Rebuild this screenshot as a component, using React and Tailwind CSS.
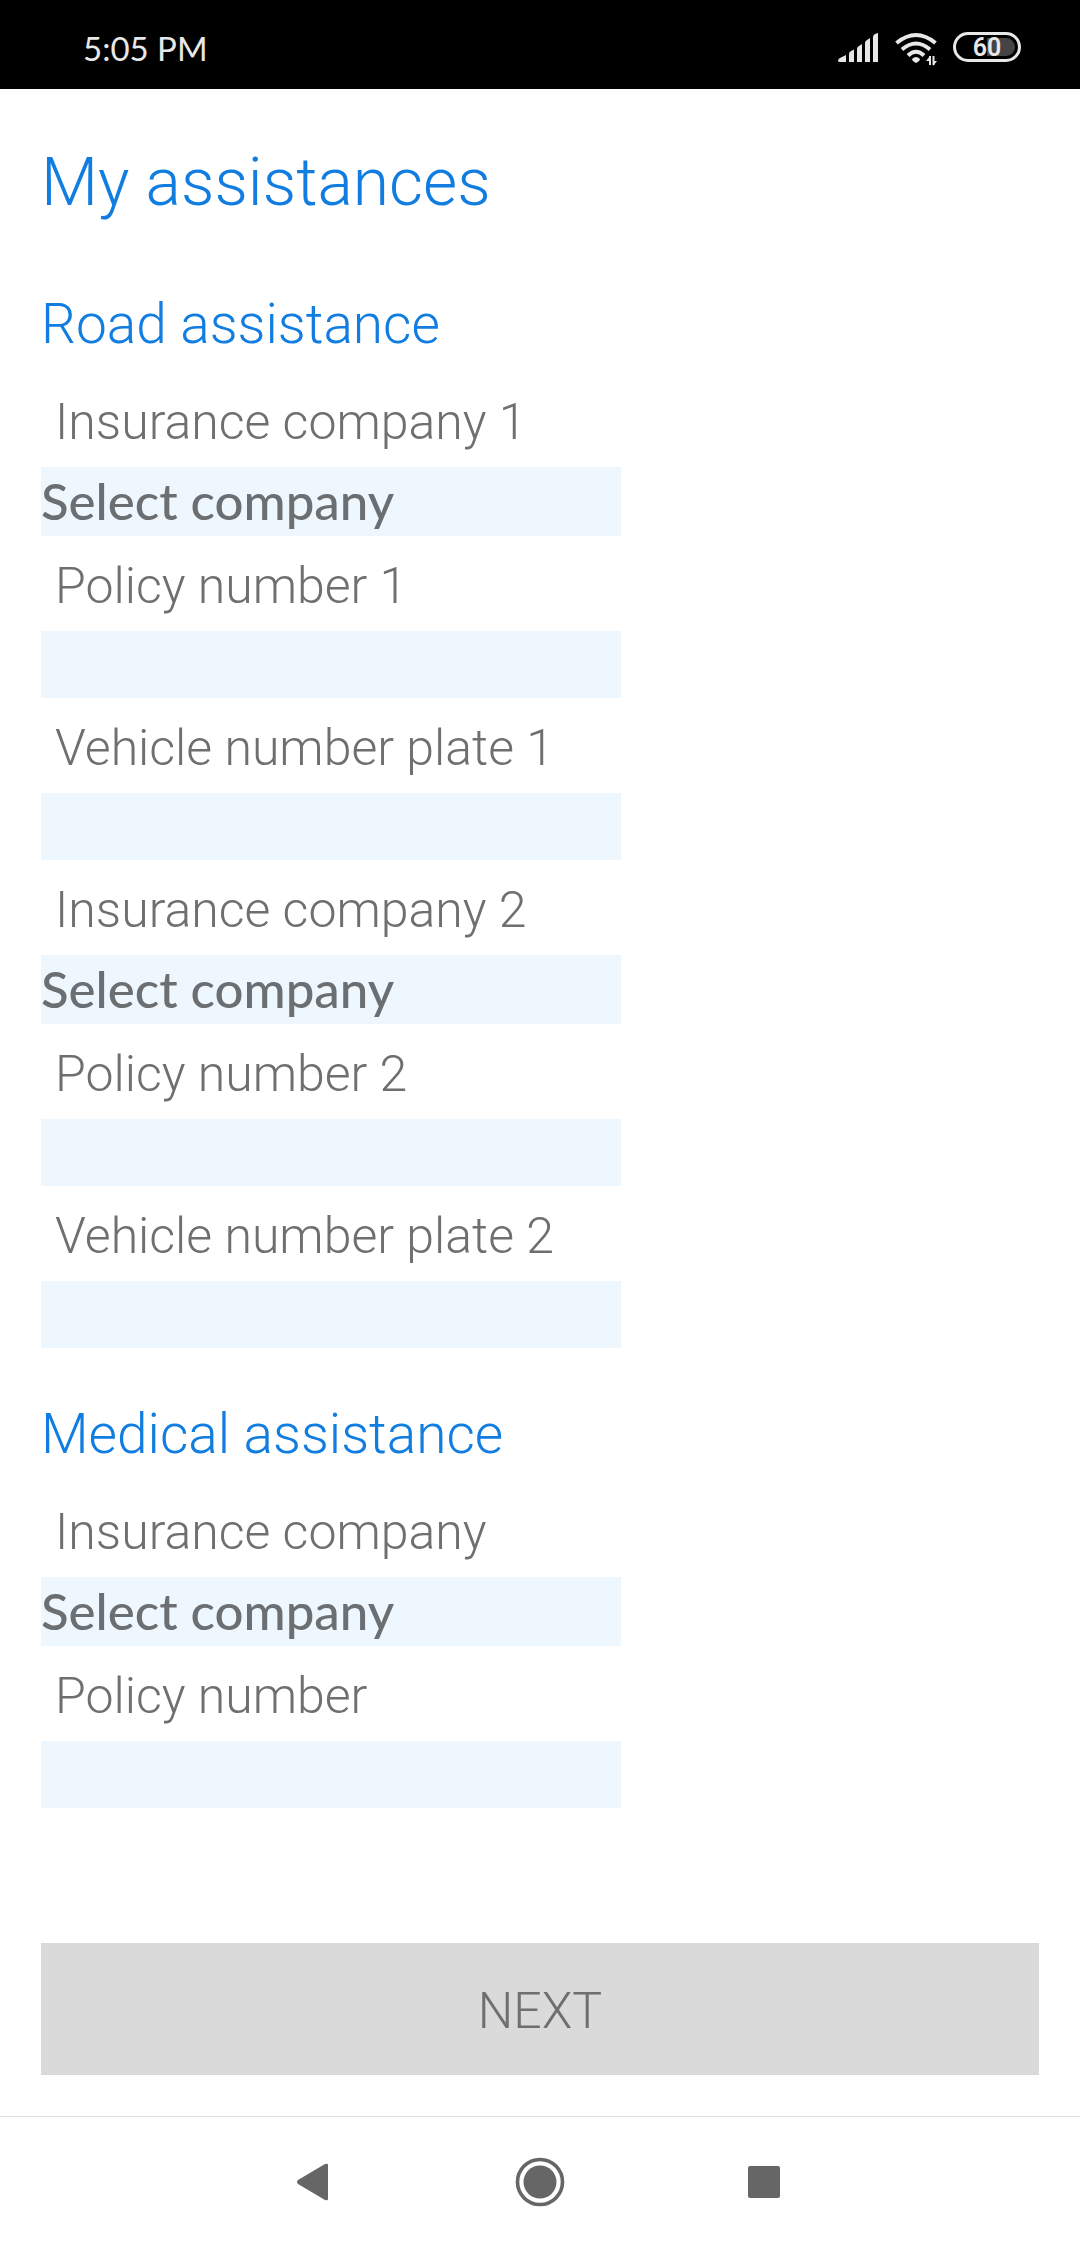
import React from "react";

const LABEL = "block pl-[14px] pt-[22px] pb-[17px] text-[50px] leading-[56px] font-light text-[#6f6f6f]";

function TextField({ id, label }) {
  return (
    <div>
      <label htmlFor={id} className={LABEL}>{label}</label>
      <input
        id={id}
        type="text"
        className="block h-[67px] w-[580px] max-w-full bg-[#eef7fe] text-[50px] text-[#6b6f72] outline-none"
      />
    </div>
  );
}

function SelectField({ id, label }) {
  return (
    <div>
      <label htmlFor={id} className={LABEL}>{label}</label>
      <select
        id={id}
        className="block h-[69px] w-[580px] max-w-full appearance-none rounded-none bg-[#eef7fe] pb-[2px] font-['Lato',sans-serif] text-[51px] leading-[60px] font-medium text-[#6b6f72] outline-none"
      >
        <option>Select company</option>
      </select>
    </div>
  );
}

function SectionTitle({ children }) {
  return <h2 className="text-[55px] leading-[66px] font-light text-[#117de0]">{children}</h2>;
}

function StatusBar() {
  return (
    <header className="flex h-[89px] items-center justify-between bg-black pr-[58px] pl-[83px] text-[#e8e8e8]">
      <span className="pt-[6px] font-['Lato',sans-serif] text-[33px] leading-[40px]">5:05 PM</span>
      <div className="flex items-center gap-4 pt-1">
        <svg width="41" height="34" viewBox="0 0 41 34" fill="currentColor" aria-label="Signal">
          <path d="M0 31 Q0 29 2 28 L8 25 V32 H2 Q0 32 0 31Z" />
          <path d="M11 24 Q11 22 13 21 L16 19.500 V32 H11Z" />
          <path d="M19 19 Q19 17 21 16 L24 14 V32 H19Z" />
          <path d="M27 13 Q27 11 29 10 L32 8 V32 H27Z" />
          <path d="M35 7 Q35 5 37 4 L40 3 V32 H35Z" />
        </svg>
        <svg width="42" height="34" viewBox="0 0 42 34" aria-label="Wi-Fi" className="overflow-visible">
          <g fill="none" stroke="currentColor" strokeWidth="4">
            <path d="M1.500 13 Q21 -3 40.500 13" />
            <path d="M7 19.500 Q21 7.500 35 19.500" />
            <path d="M13 25.500 Q21 18 29 25.500" />
          </g>
          <path d="M17 29 Q21 25 25 29 Q25 31 21 33 Q17 31 17 29Z" fill="currentColor" />
          <path d="M35 35 V26 M38.500 26 V35" stroke="currentColor" strokeWidth="2" />
          <path d="M31 31 L35 26 V31Z M38 31 H42 L38 36Z" fill="currentColor" />
        </svg>
        <svg width="69" height="34" viewBox="0 0 69 34" aria-label="Battery 60%">
          <rect x="1.500" y="3.500" width="65" height="27" rx="13.500" fill="none" stroke="currentColor" strokeWidth="3" />
          <path d="M34 8 H53 A9 9 0 0 1 53 26 H34Z" fill="#444444" />
          <text x="34" y="26" textAnchor="middle" fill="currentColor" fontSize="25" fontWeight="600" fontFamily="Roboto, sans-serif">60</text>
        </svg>
      </div>
    </header>
  );
}

function NavBar() {
  const cls = "size-12";
  return (
    <nav className="flex h-[130px] items-center justify-center gap-44 border-t border-[#dedede] text-[#666666]">
      <button type="button" aria-label="Back" className={cls}>
        <svg viewBox="0 0 48 48" className="size-12" fill="currentColor">
          <path d="M6 22 L33 6 Q36 5 36 7 V41 Q36 43 33 42 L6 26 Q4 24 6 22Z" />
        </svg>
      </button>
      <button type="button" aria-label="Home" className={cls}>
        <svg viewBox="0 0 48 48" className="size-12 overflow-visible">
          <circle cx="24" cy="24" r="22.500" fill="none" stroke="currentColor" strokeWidth="3.600" />
          <circle cx="24" cy="24" r="16.500" fill="currentColor" />
        </svg>
      </button>
      <button type="button" aria-label="Recent apps" className={cls}>
        <svg viewBox="0 0 48 48" className="size-12" fill="currentColor">
          <rect x="8" y="8" width="32" height="32" rx="2" />
        </svg>
      </button>
    </nav>
  );
}

export default function App() {
  return (
    <div className="flex min-h-screen flex-col bg-white font-['Roboto',sans-serif]">
      <StatusBar />
      <main className="flex grow flex-col px-[41px] pb-[41px]">
        <h1 className="pt-[54px] text-[66px] leading-[80px] font-light text-[#117de0]">My assistances</h1>
        <section className="pt-[68px]">
          <SectionTitle>Road assistance</SectionTitle>
          <div className="pt-[15px]">
            <SelectField id="company-1" label="Insurance company 1" />
            <TextField id="policy-1" label="Policy number 1" />
            <TextField id="plate-1" label="Vehicle number plate 1" />
            <SelectField id="company-2" label="Insurance company 2" />
            <TextField id="policy-2" label="Policy number 2" />
            <TextField id="plate-2" label="Vehicle number plate 2" />
          </div>
        </section>
        <section className="pt-[53px]">
          <SectionTitle>Medical assistance</SectionTitle>
          <div className="pt-[15px]">
            <SelectField id="company-medical" label="Insurance company" />
            <TextField id="policy-medical" label="Policy number" />
          </div>
        </section>
        <button type="button" className="mt-auto h-[132px] w-full bg-[#dadada] pt-1 text-[50px] leading-[60px] font-light text-[#6f6f6f]">
          NEXT
        </button>
      </main>
      <NavBar />
    </div>
  );
}
